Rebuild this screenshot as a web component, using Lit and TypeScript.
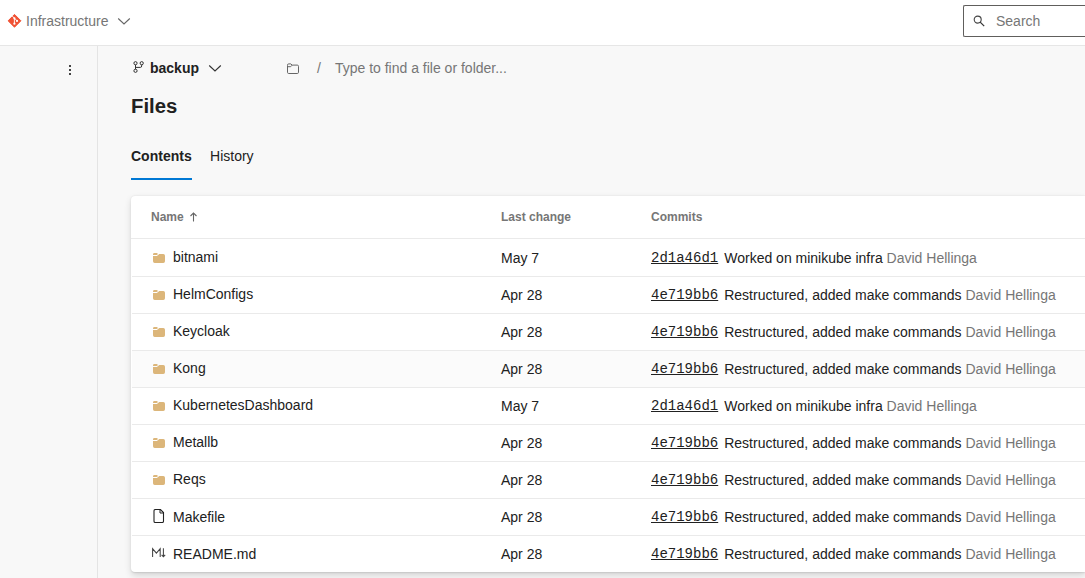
import { LitElement, html, css, svg } from "lit";
import { customElement, property } from "lit/decorators.js";
import { classMap } from "lit/directives/class-map.js";

type Kind = "folder" | "file" | "markdown";

interface Entry {
  name: string;
  kind: Kind;
  date: string;
  hash: string;
  message: string;
  author: string;
  hovered?: boolean;
}

const author = "David Hellinga";
const minikube = { date: "May 7", hash: "2d1a46d1", message: "Worked on minikube infra", author };
const restructured = { date: "Apr 28", hash: "4e719bb6", message: "Restructured, added make commands", author };

const entries: Entry[] = [
  { name: "bitnami", kind: "folder", ...minikube },
  { name: "HelmConfigs", kind: "folder", ...restructured },
  { name: "Keycloak", kind: "folder", ...restructured },
  { name: "Kong", kind: "folder", ...restructured, hovered: true },
  { name: "KubernetesDashboard", kind: "folder", ...minikube },
  { name: "Metallb", kind: "folder", ...restructured },
  { name: "Reqs", kind: "folder", ...restructured },
  { name: "Makefile", kind: "file", ...restructured },
  { name: "README.md", kind: "markdown", ...restructured },
];

const glyphs = {
  folder: svg`
    <path d="M1 4.1V3.5Q1 2.1 2.4 2.1H4.8L6.2 3.1 4.7 4.1Z" fill="#dcb67a"/>
    <path d="M1 5H4.9L7.3 3.1H11.3Q13 3.1 13 4.7V10.3Q13 12 11.3 12H2.7Q1 12 1 10.3Z" fill="#dcb67a"/>`,
  file: svg`
    <path d="M3.6.5H8.4L11.5 3.6V12.2Q11.5 13.5 10.2 13.5H3.3Q2 13.5 2 12.2V1.8Q2 .5 3.6.5Z" fill="none" stroke="#222" stroke-width="1.1"/>
    <path d="M8 .7V4H11.4" fill="none" stroke="#222" stroke-width="1"/>`,
  markdown: svg`
    <path d="M.6 11V2.7L4.4 7.1 8.2 2.7V11M11.4 2.2V10.6M9.6 8.9 11.4 10.7 13.2 8.9" fill="none" stroke="#444" stroke-width="1.05"/>`,
};

@customElement("file-row")
export class FileRow extends LitElement {
  @property({ attribute: false }) entry!: Entry;

  static styles = css`
    :host { display: block; }
    .row {
      box-sizing: border-box;
      height: 37px;
      margin-left: 1px;
      padding-left: 19px;
      display: grid;
      grid-template-columns: 350px 150px 1fr;
      line-height: 16px;
      border-bottom: 1px solid #eaeaea;
      white-space: nowrap;
    }
    :host(:first-of-type) .row { height: 38px; padding-top: 1px; }
    :host(:last-of-type) .row { border-bottom: 0; }
    .hovered { background: #fbfbfb; }
    .name { display: flex; padding-top: 9px; }
    .lower { padding-top: 10px; }
    .icon { width: 14px; height: 14px; margin: 2px 7px 0 1px; }
    .lower .icon { margin-top: 0; }
    .date, .commit { padding-top: 10px; }
    .hash {
      font-family: "Liberation Mono", monospace;
      line-height: 12px;
      vertical-align: 1px;
      text-decoration: underline;
      margin-right: 6px;
    }
    .author { color: #767676; }
  `;

  render() {
    const e = this.entry;
    return html`
      <div class=${classMap({ row: true, hovered: !!e.hovered })}>
        <div class=${classMap({ name: true, lower: e.kind !== "folder" })}>
          <svg class="icon" viewBox="0 0 14 14">${glyphs[e.kind]}</svg><span>${e.name}</span>
        </div>
        <div class="date">${e.date}</div>
        <div class="commit"><span class="hash">${e.hash}</span><span>${e.message}</span> <span class="author">${e.author}</span></div>
      </div>`;
  }
}

@customElement("app-root")
export class AppRoot extends LitElement {
  static styles = css`
    :host {
      display: flex;
      flex-direction: column;
      height: 578px;
      overflow: hidden;
      background: #f8f8f8;
      color: #212121;
      font: 14px/16px "Liberation Sans", Arial, sans-serif;
    }
    svg { display: block; flex: none; }
    .top {
      box-sizing: border-box;
      flex: none;
      height: 46px;
      display: flex;
      justify-content: space-between;
      background: #fff;
      border-bottom: 1px solid #e6e6e6;
    }
    .project { display: flex; padding: 13px 0 0 7px; color: #767676; }
    .git { margin-right: 4px; }
    .project .chevron { margin: 4px 0 0 9px; }
    .search {
      box-sizing: border-box;
      width: 122px;
      height: 32px;
      margin-top: 5px;
      padding: 7px 0 0 9px;
      display: flex;
      border: 1px solid #605e5c;
      border-right: 0;
      border-radius: 2px 0 0 2px;
      color: #767676;
    }
    .search svg { margin: 2px 11px 0 0; }
    .body { flex: 1; min-height: 0; display: flex; }
    .side {
      box-sizing: border-box;
      flex: none;
      width: 98px;
      padding: 18px 0 0 67px;
      border-right: 1px solid #e4e4e4;
    }
    .main { flex: 1; min-width: 0; padding-left: 33px; }
    .path { height: 30px; padding-top: 14px; box-sizing: border-box; display: flex; color: #767676; }
    .branch { width: 155px; display: flex; color: #212121; font-weight: bold; }
    .branch .fork { margin: 0 5px 0 1px; }
    .branch .chevron { margin: 4px 0 0 9px; }
    .slash { margin: 0 14px 0 17px; }
    .title { margin: 18px 0 0; font-size: 20.3px; line-height: 24px; font-weight: bold; }
    .tabs { display: flex; gap: 18.4px; margin-top: 30px; height: 32px; }
    .tab { height: 30px; }
    .active { font-weight: bold; border-bottom: 2px solid #0078d4; }
    .card {
      margin-top: 16px;
      height: 376px;
      overflow: hidden;
      background: #fff;
      border-radius: 4px 0 0 4px;
      box-shadow: 0 3.2px 7.2px rgba(0, 0, 0, 0.13), 0 0.6px 1.8px rgba(0, 0, 0, 0.11);
    }
    .head {
      box-sizing: border-box;
      height: 43px;
      padding: 13px 0 0 20px;
      display: grid;
      grid-template-columns: 350px 150px 1fr;
      border-bottom: 1px solid #eaeaea;
      color: #767676;
      font-size: 12px;
      font-weight: bold;
    }
    .sort { display: flex; gap: 5px; }
    .sort svg { margin-top: 3px; }
  `;

  chevron(color: string) {
    return html`<svg class="chevron" width="14" height="9" viewBox="0 0 14 9"><path d="M1.2 1.5 7 7 12.8 1.5" fill="none" stroke=${color} stroke-width="1.1"/></svg>`;
  }

  render() {
    return html`
      <header class="top">
        <div class="project">
          <svg class="git" width="15" height="15" viewBox="0 0 15 15">
            <path d="M7.5 1.4 13.9 7.8 7.5 14.2 1.1 7.8Z" fill="#f05133" stroke="#f05133" stroke-width="1" stroke-linejoin="round"/>
            <path d="M5 2.8 7.4 5.2V10.8M7.4 5.2 10 7.8" fill="none" stroke="#fff" stroke-width=".9"/>
            <circle cx="7.4" cy="5.3" r="1.1" fill="#fff"/><circle cx="7.4" cy="10.7" r="1.1" fill="#fff"/><circle cx="10" cy="7.9" r="1.1" fill="#fff"/>
          </svg>
          <span>Infrastructure</span>${this.chevron("#666")}
        </div>
        <div class="search">
          <svg width="12" height="12" viewBox="0 0 12 12"><circle cx="4.7" cy="4.6" r="3.5" fill="none" stroke="#444" stroke-width="1.1"/><path d="M7.2 7.1 11.2 11.1" stroke="#333" stroke-width="1.2"/></svg>
          <span>Search</span>
        </div>
      </header>
      <div class="body">
        <nav class="side">
          <svg width="6" height="12" viewBox="0 0 6 12" fill="#444"><path d="M2 1h2v2H2zM2 5h2v2H2zM2 9h2v2H2z"/></svg>
        </nav>
        <main class="main">
          <div class="path">
            <div class="branch">
              <svg class="fork" width="13" height="14" viewBox="0 0 13 14" fill="none" stroke="#333" stroke-width="1">
                <circle cx="3.5" cy="3.2" r="1.6"/><circle cx="9.7" cy="3.2" r="1.6"/><circle cx="3.5" cy="10.8" r="1.6"/>
                <path d="M3.5 4.8V9.2M9.7 4.8V6Q9.7 7.4 8.3 7.4H3.5"/>
              </svg>
              <span>backup</span>${this.chevron("#333")}
            </div>
            <svg width="14" height="14" viewBox="0 0 14 14" fill="none" stroke="#666" stroke-width="1">
              <path d="M1.5 5.4V5Q1.5 3.9 2.7 3.9H4.8L6.2 5.1H11.3Q12.5 5.1 12.5 6.3V12.3Q12.5 13.5 11.3 13.5H2.7Q1.5 13.5 1.5 12.3ZM1.5 6.7H4.7L6.2 5.1"/>
            </svg>
            <span class="slash">/</span><span>Type to find a file or folder...</span>
          </div>
          <h1 class="title">Files</h1>
          <div class="tabs"><div class="tab active">Contents</div><div class="tab">History</div></div>
          <section class="card">
            <div class="head">
              <div class="sort"><span>Name</span><svg width="9" height="10" viewBox="0 0 9 10"><path d="M4.5 9.5V1.2M1.5 4 4.5 1 7.5 4" fill="none" stroke="#666" stroke-width="1.1"/></svg></div>
              <div>Last change</div>
              <div>Commits</div>
            </div>
            ${entries.map((e) => html`<file-row .entry=${e}></file-row>`)}
          </section>
        </main>
      </div>`;
  }
}
